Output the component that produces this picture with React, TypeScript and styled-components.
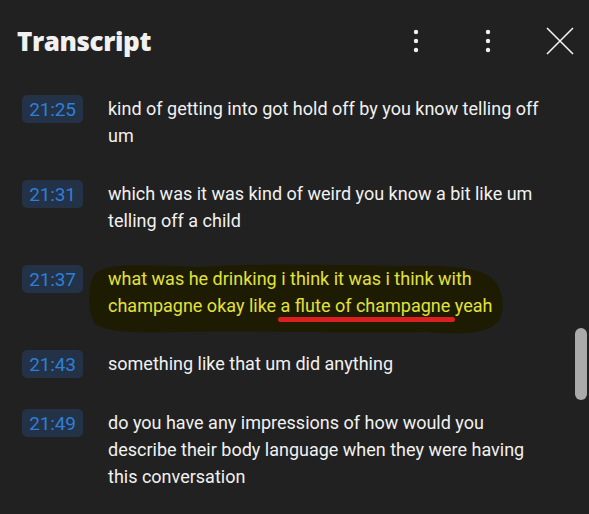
import React from "react";
import styled, { createGlobalStyle } from "styled-components";

type Entry = {
    time: string;
    text: React.ReactNode;
    highlight?: boolean;
};

export default function App() {
    const entries: Entry[] = [
        {
            time: "21:25",
            text: "kind of getting into got hold off by you know telling off um",
        },
        {
            time: "21:31",
            text: "which was it was kind of weird you know a bit like um telling off a child",
        },
        {
            time: "21:37",
            highlight: true,
            text: (
                <>
                    what was he drinking i think it was i think with champagne
                    okay like <Underlined>a flute of champagne</Underlined> yeah
                </>
            ),
        },
        {
            time: "21:43",
            text: "something like that um did anything",
        },
        {
            time: "21:49",
            text: "do you have any impressions of how would you describe their body language when they were having this conversation",
        },
    ];

    return (
        <>
            <GlobalStyle />
            <Panel>
                <Header>
                    <Title>Transcript</Title>
                    <Actions>
                        <IconButton aria-label="More">
                            <DotsIcon />
                        </IconButton>
                        <IconButton aria-label="More options">
                            <DotsIcon />
                        </IconButton>
                        <IconButton aria-label="Close">
                            <svg width="28" height="28" viewBox="0 0 28 28">
                                <path
                                    d="M1 1 L27 27 M27 1 L1 27"
                                    stroke="#f1f1f1"
                                    strokeWidth="1.6"
                                    fill="none"
                                />
                            </svg>
                        </IconButton>
                    </Actions>
                </Header>
                <List>
                    {entries.map((entry) => (
                        <Row key={entry.time}>
                            <Stamp>{entry.time}</Stamp>
                            <Line $highlight={entry.highlight}>
                                {entry.highlight && (
                                    <Blob
                                        viewBox="0 0 420 76"
                                        preserveAspectRatio="none"
                                    >
                                        <path
                                            d="M8 12 C20 2 60 4 110 6 C180 2 250 4 320 5 C370 4 392 8 404 16 C416 26 420 44 414 58 C408 72 380 76 340 72 C260 74 160 70 90 72 C50 73 18 72 8 64 C1 56 0 40 2 28 C3 20 4 16 8 12 Z"
                                            fill="#1d1c02"
                                        />
                                    </Blob>
                                )}
                                <TextInner>{entry.text}</TextInner>
                            </Line>
                        </Row>
                    ))}
                </List>
                <Scrollbar />
            </Panel>
        </>
    );
}

function DotsIcon() {
    return (
        <svg width="6" height="24" viewBox="0 0 6 24">
            <circle cx="3" cy="3" r="2.2" fill="#f1f1f1" />
            <circle cx="3" cy="12" r="2.2" fill="#f1f1f1" />
            <circle cx="3" cy="21" r="2.2" fill="#f1f1f1" />
        </svg>
    );
}

const GlobalStyle = createGlobalStyle`
    html, body {
        margin: 0;
        padding: 0;
        background: #212121;
    }
    * {
        box-sizing: border-box;
    }
`;

const Panel = styled.div`
    position: relative;
    width: 589px;
    height: 514px;
    overflow: hidden;
    background-color: #212121;
    font-family: Roboto, "Liberation Sans", sans-serif;
`;
const Header = styled.div`
    display: flex;
    align-items: center;
    justify-content: space-between;
    height: 82px;
    padding: 0 9px 0 17px;
`;
const Title = styled.h1`
    margin: 0;
    font-family: "Open Sans", sans-serif;
    font-size: 26px;
    font-weight: 800;
    letter-spacing: -0.4px;
    color: #f1f1f1;
`;
const Actions = styled.div`
    display: flex;
    align-items: center;
    gap: 32px;
`;
const IconButton = styled.button`
    width: 40px;
    height: 40px;
    display: flex;
    align-items: center;
    justify-content: center;
    padding: 0;
    border: none;
    background: none;
`;
const List = styled.div`
    display: flex;
    flex-direction: column;
    gap: 31px;
    padding: 13px 40px 0 22px;
`;
const Row = styled.div`
    display: grid;
    grid-template-columns: 61px 1fr;
    column-gap: 25px;
    align-items: start;
`;
const Stamp = styled.span`
    display: flex;
    align-items: center;
    justify-content: center;
    height: 28px;
    border-radius: 5px;
    background-color: #233247;
    color: #2f7fd6;
    font-size: 19px;
    letter-spacing: -0.2px;
`;
const Line = styled.div<{ $highlight?: boolean }>`
    position: relative;
    font-size: 18px;
    line-height: 27px;
    color: ${(p) => (p.$highlight ? "#e2e23a" : "#f1f1f1")};
`;
const TextInner = styled.span`
    position: relative;
`;
const Blob = styled.svg`
    position: absolute;
    left: -20px;
    top: -4px;
    width: 418px;
    height: 75px;
`;
const Underlined = styled.span`
    position: relative;

    &::after {
        content: "";
        position: absolute;
        left: -3px;
        right: -5px;
        bottom: -6px;
        height: 5px;
        border-radius: 3px;
        background-color: #dc1f1f;
    }
`;
const Scrollbar = styled.div`
    position: absolute;
    right: 2px;
    top: 328px;
    width: 12px;
    height: 72px;
    border-radius: 6px;
    background-color: #aaaaaa;
`;
